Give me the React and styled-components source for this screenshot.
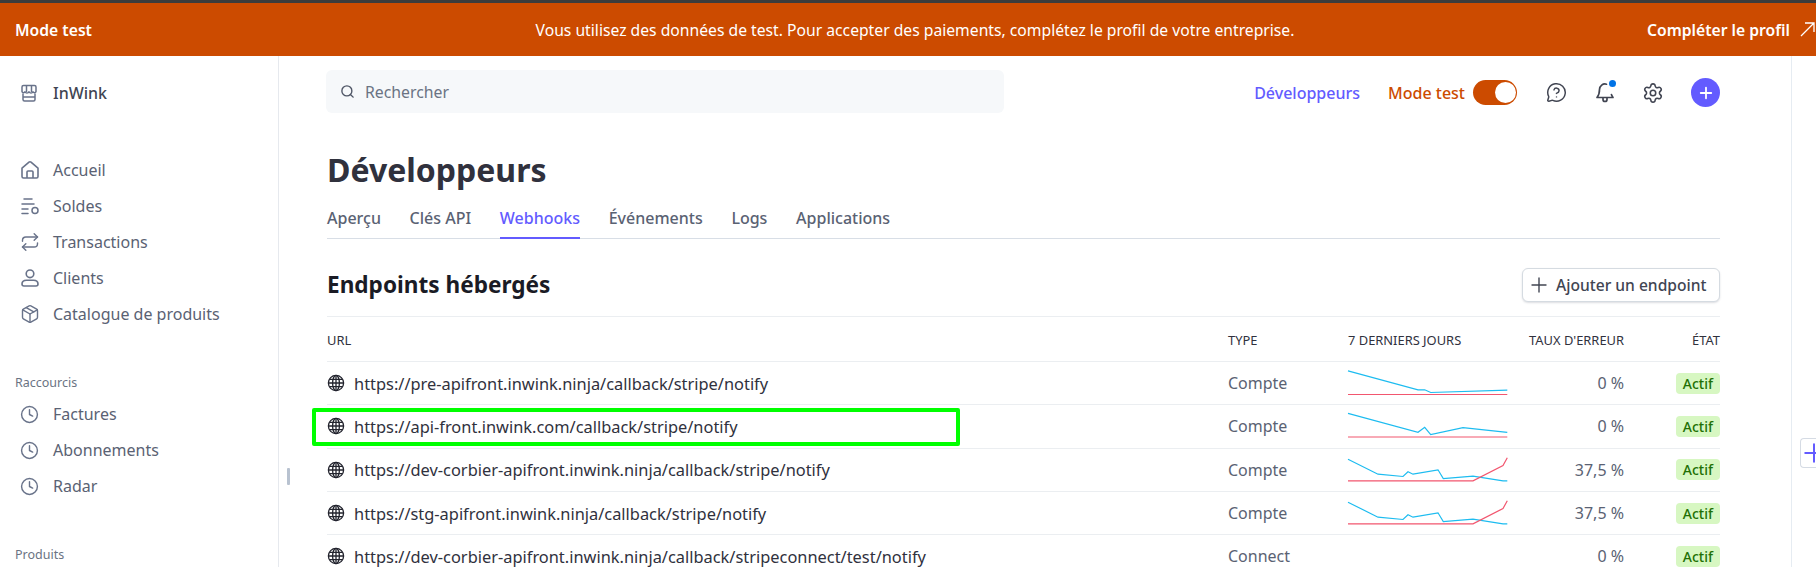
import React from 'react';
import styled, { createGlobalStyle } from 'styled-components';
import { Search, Plus, Settings, MessageCircleQuestion, Repeat, Package, Clock } from 'lucide-react';

const Global = createGlobalStyle`
  html, body { margin: 0; padding: 0; background: #fff; height: 100%; overflow: hidden; }
  body { font-family: "Noto Sans", "Open Sans", sans-serif; color: #414552; }
  * { box-sizing: border-box; }
`;

const Page = styled.div`height: 567px; overflow: hidden; display: flex; flex-direction: column; border-top: 3px solid #3c3c3c;`;
const Banner = styled.div`
  height: 53px; flex: none; background: #cc4b00; color: #fff; display: grid;
  grid-template-columns: 1fr auto 1fr; align-items: center; padding: 0 1px 0 15px; font-size: 15.7px;
`;
const BannerStrong = styled.span`font-weight: 600; font-size: 15.7px;`;
const BannerText = styled.span``;
const BannerLink = styled.span`justify-self: end; display: flex; align-items: center; gap: 10px; font-weight: 600;`;
const Body = styled.div`flex: 1; display: flex; min-height: 0;`;
const Sidebar = styled.aside`width: 279px; flex: none; border-right: 1px solid #e6e9ee; padding-top: 20px;`;
const Account = styled.div`display: flex; align-items: center; height: 34px; padding-left: 20px; font-size: 16px; font-weight: 500; color: #414552; margin-bottom: 42px; svg { color: #69738a; }`;
const NavItem = styled.div`display: flex; align-items: center; height: 36px; padding-left: 20px; font-size: 16px; color: #5a6273; svg { color: #69738a; }`;
const IconBox = styled.span`width: 33px; flex: none; display: flex; align-items: center;`;
const NavLabel = styled.div`font-size: 12.5px; color: #6a7383; padding-left: 15px; line-height: 18px; margin-bottom: ${p => p.$gap || 0}px;`;
const Group = styled.div`margin-top: ${p => p.$top}px;`;
const Main = styled.main`flex: 1; position: relative; padding: 14px 0 0 48px; min-width: 0; overflow: hidden;`;
const Handle = styled.div`position: absolute; left: 8px; top: 412px; width: 3px; height: 17px; background: #b8c2d0; border-radius: 1px;`;
const RightRail = styled.div`width: 25px; flex: none; border-left: 1px solid #e6ecf2; position: relative;`;
const RailWidget = styled.div`position: absolute; left: 8px; top: 382px; width: 24px; height: 30px; border: 1px solid #d5dbe4; border-right: none; border-radius: 4px 0 0 4px; color: #635bff; display: flex; align-items: center; background: #fff; svg { flex: none; margin-left: -2px; }`;
const Content = styled.div`width: 1393px;`;
const Topbar = styled.div`display: flex; align-items: center; height: 43px;`;
const SearchBox = styled.div`width: 678px; height: 43px; background: #f6f8fa; border-radius: 6px; display: flex; align-items: center; gap: 10px; padding-left: 14px; font-size: 15.8px; color: #6a7383; margin-left: -1px; svg { color: #4f5666; }`;
const TopActions = styled.div`margin-left: auto; display: flex; align-items: center; height: 43px; margin-top: 2px;`;
const DevLink = styled.span`color: #635bff; font-size: 16px; font-weight: 500; margin-right: 28px;`;
const ModeLabel = styled.span`color: #cc4b00; font-size: 16px; font-weight: 500; margin-right: 8px;`;
const Toggle = styled.span`width: 44px; height: 25px; border-radius: 13px; background: #cc4b00; display: flex; justify-content: flex-end; align-items: center; padding-right: 1px; margin-right: 29px;`;
const Knob = styled.span`width: 21px; height: 21px; border-radius: 50%; background: #fff; display: block;`;
const IconSlot = styled.span`position: relative; display: flex; color: #414552; margin-right: ${p => p.$mr}px;`;
const Dot = styled.span`position: absolute; top: -2px; right: -1px; width: 7px; height: 7px; border-radius: 50%; background: #0073e6;`;
const Round = styled.span`width: 29px; height: 29px; border-radius: 50%; background: #635bff; color: #fff; display: flex; align-items: center; justify-content: center;`;
const Title = styled.h1`margin: 37px 0 0; font-size: 32px; line-height: 40px; font-weight: 700; color: #30313d;`;
const Tabs = styled.div`margin-top: 9px; height: 40px; display: flex; gap: 28.7px; border-bottom: 1px solid #d8dee6;`;
const Tab = styled.div`height: 40px; display: flex; align-items: center; font-size: 16px; font-weight: 500; color: ${p => p.$active ? '#635bff' : '#5a6273'}; border-bottom: 2px solid ${p => p.$active ? '#635bff' : 'transparent'};`;
const SectionHead = styled.div`display: flex; align-items: center; justify-content: space-between; padding: 29px 0 14px;`;
const SectionTitle = styled.h2`margin: 0; font-size: 22.6px; line-height: 28px; font-weight: 700; color: #1a1b25;`;
const AddButton = styled.button`width: 198px; height: 34px; border: 1px solid #d5dbe1; border-radius: 6px; background: #fff; box-shadow: 0 1px 2px rgba(60,66,87,.18); display: flex; align-items: center; gap: 5px; padding: 0 0 0 4px; font: 500 15.6px "Noto Sans", sans-serif; color: #414552;`;
const Grid = styled.div`
  display: grid; grid-template-columns: 901px 120px 160px 116px 96px; align-items: center;
  border-bottom: 1px solid #ebeef1; position: relative;
`;
const HeadRow = styled(Grid)`height: 46px; padding-top: 1px; border-top: 1px solid #ebeef1; font-size: 12.9px; color: #30313d;`;
const Row = styled(Grid)`height: 43.33px; font-size: 16px; color: #5a6273;`;
const Right = styled.div`text-align: right;`;
const UrlCell = styled.div`display: flex; align-items: center; gap: 9px; color: #30313d; font-size: 16.4px; svg { color: #23242e; flex: none; }`;
const Badge = styled.span`float: right; height: 21px; padding: 0 7px; border-radius: 4px; background: #d7f7c2; color: #217005; font-size: 14px; font-weight: 500; display: flex; align-items: center;`;
const Highlight = styled.div`position: absolute; left: -15px; top: 3px; width: 648px; height: 38px; border: 4px solid #00ff00; border-radius: 2px; pointer-events: none;`;
const Spark = styled.svg`display: block; width: 160px; height: 30px; overflow: visible;`;

const ExternalArrow = () => (
  <svg width="15" height="15" viewBox="0 0 15 15" fill="none" stroke="currentColor" strokeWidth="1.3">
    <path d="M1 14 14 1M5 1h9v9" />
  </svg>
);
const StoreIcon = () => (
  <svg width="18" height="18" viewBox="0 0 18 18" fill="none" stroke="currentColor" strokeWidth="1.5" strokeLinejoin="round">
    <path d="M3.5 1.5h11a1.5 1.5 0 0 1 1.5 1.5v4.5a1.6 1.6 0 0 1-3 .3 2.2 2.2 0 0 1-4 0 2.2 2.2 0 0 1-4 0 1.6 1.6 0 0 1-3-.3V3a1.5 1.5 0 0 1 1.5-1.5Z" />
    <path d="M6.5 1.5v6.5M11.5 1.5v6.5" />
    <path d="M3 9.5v6a1.5 1.5 0 0 0 1.5 1.5h9a1.5 1.5 0 0 0 1.5-1.5v-6M3 13h12" />
  </svg>
);
const HomeIcon = () => (
  <svg width="20" height="20" viewBox="0 0 20 20" fill="none" stroke="currentColor" strokeWidth="1.6" strokeLinejoin="round">
    <path d="M2 8.2 9 2.2a1.5 1.5 0 0 1 2 0l7 6V16.5a1.5 1.5 0 0 1-1.5 1.5h-13A1.5 1.5 0 0 1 2 16.5Z" />
    <path d="M7 18v-6a1 1 0 0 1 1-1h4a1 1 0 0 1 1 1v6" />
  </svg>
);
const BalanceIcon = () => (
  <svg width="20" height="20" viewBox="0 0 20 20" fill="none" stroke="currentColor" strokeWidth="1.5" strokeLinecap="round">
    <path d="M4 3h8M2 8h12M2 13h6M2 17.5h6" />
    <circle cx="15" cy="14.5" r="3" />
  </svg>
);
const UserIcon = () => (
  <svg width="20" height="20" viewBox="0 0 20 20" fill="none" stroke="currentColor" strokeWidth="1.6">
    <circle cx="10" cy="5.8" r="3.8" />
    <path d="M2 16c0-2.4 2-3.8 4.5-3.8h7c2.5 0 4.5 1.4 4.5 3.8 0 1.2-.8 2-2 2H4c-1.2 0-2-.8-2-2Z" />
  </svg>
);
const GlobeIcon = () => (
  <svg width="18" height="18" viewBox="0 0 18 18" fill="none" stroke="currentColor" strokeWidth="1.3">
    <circle cx="9" cy="9" r="7.6" />
    <ellipse cx="9" cy="9" rx="3.4" ry="7.6" />
    <path d="M9 1.4v15.2M1.4 9h15.2M2.4 5.4h13.2M2.4 12.6h13.2" />
  </svg>
);
const BellIcon = () => (
  <svg width="20" height="22" viewBox="0 0 20 22" fill="none" stroke="currentColor" strokeWidth="1.7" strokeLinecap="round" strokeLinejoin="round">
    <path d="M11.5 2.2A5.5 5.5 0 0 0 4.5 7.5c0 4.5-1.2 6.5-2.5 8h16c-.6-.8-1.2-1.7-1.6-3" />
    <path d="M8 16v1.5a2 2 0 0 0 4 0V16" />
  </svg>
);

const rows = [
  { url: 'https://pre-apifront.inwink.ninja/callback/stripe/notify', type: 'Compte', rate: '0 %',
    blue: '0,2.8 70,21.8 76.7,21.8 82.7,24.5 159.3,22.2', red: '0,26.5 159.3,26.5' },
  { url: 'https://api-front.inwink.com/callback/stripe/notify', type: 'Compte', rate: '0 %', mark: true,
    blue: '0,2.3 70,21.3 76.7,16.3 82.7,23.7 115,16.7 159.3,21.3', red: '0,26 159.3,26' },
  { url: 'https://dev-corbier-apifront.inwink.ninja/callback/stripe/notify', type: 'Compte', rate: '37,5 %',
    blue: '0,4.2 30,19.2 55,21.5 60,16.8 65,19.2 90,14.8 95.3,23.5 125,21.2 155,25.8 159.3,25.8', red: '0,25.8 125,25.8 155,10.5 159.3,2.8' },
  { url: 'https://stg-apifront.inwink.ninja/callback/stripe/notify', type: 'Compte', rate: '37,5 %',
    blue: '0,4.2 30,19.2 55,21.5 60,16.8 65,19.2 90,14.8 95.3,23.5 125,21.2 155,25.8 159.3,25.8', red: '0,25.8 125,25.8 155,10.5 159.3,2.8' },
  { url: 'https://dev-corbier-apifront.inwink.ninja/callback/stripeconnect/test/notify', type: 'Connect', rate: '0 %' },
];

const tabs = ['Aperçu', 'Clés API', 'Webhooks', 'Événements', 'Logs', 'Applications'];
const lucide = I => () => <I size={20} strokeWidth={1.7} />;
const main = [['Accueil', HomeIcon], ['Soldes', BalanceIcon], ['Transactions', lucide(Repeat)], ['Clients', UserIcon], ['Catalogue de produits', lucide(Package)]];
const shortcuts = ['Factures', 'Abonnements', 'Radar'];

export default function App() {
  return (
    <Page>
      <Global />
      <Banner>
        <BannerStrong>Mode test</BannerStrong>
        <BannerText>Vous utilisez des données de test. Pour accepter des paiements, complétez le profil de votre entreprise.</BannerText>
        <BannerLink>Compléter le profil <ExternalArrow /></BannerLink>
      </Banner>
      <Body>
        <Sidebar>
          <Account><IconBox><StoreIcon /></IconBox>InWink</Account>
          {main.map(([label, Icon]) => (
            <NavItem key={label}><IconBox><Icon /></IconBox>{label}</NavItem>
          ))}
          <Group $top={42}>
            <NavLabel $gap={4}>Raccourcis</NavLabel>
            {shortcuts.map(label => <NavItem key={label}><IconBox><Clock size={19} strokeWidth={1.8} /></IconBox>{label}</NavItem>)}
          </Group>
          <Group $top={42}><NavLabel>Produits</NavLabel></Group>
        </Sidebar>
        <Main>
          <Handle />
          <Content>
            <Topbar>
              <SearchBox><Search size={15} strokeWidth={2.2} />Rechercher</SearchBox>
              <TopActions>
                <DevLink>Développeurs</DevLink>
                <ModeLabel>Mode test</ModeLabel>
                <Toggle><Knob /></Toggle>
                <IconSlot $mr={28}><MessageCircleQuestion size={21} strokeWidth={1.7} /></IconSlot>
                <IconSlot $mr={27}><BellIcon /><Dot /></IconSlot>
                <IconSlot $mr={27}><Settings size={22} strokeWidth={1.7} /></IconSlot>
                <Round><Plus size={18} strokeWidth={2.4} /></Round>
              </TopActions>
            </Topbar>
            <Title>Développeurs</Title>
            <Tabs>{tabs.map(t => <Tab key={t} $active={t === 'Webhooks'}>{t}</Tab>)}</Tabs>
            <SectionHead>
              <SectionTitle>Endpoints hébergés</SectionTitle>
              <AddButton><Plus size={24} strokeWidth={1.4} />Ajouter un endpoint</AddButton>
            </SectionHead>
            <HeadRow>
              <div>URL</div><div>TYPE</div><div>7 DERNIERS JOURS</div>
              <Right>TAUX D'ERREUR</Right><Right>ÉTAT</Right>
            </HeadRow>
            {rows.map(r => (
              <Row key={r.url}>
                <UrlCell><GlobeIcon />{r.url}</UrlCell>
                <div>{r.type}</div>
                <div>
                  {r.blue && (
                    <Spark viewBox="0 0 160 30">
                      <polyline points={r.blue} fill="none" stroke="#1dbcf0" strokeWidth="1.2" />
                      <polyline points={r.red} fill="none" stroke="#f2566f" strokeWidth="1.2" />
                    </Spark>
                  )}
                </div>
                <Right>{r.rate}</Right>
                <div><Badge>Actif</Badge></div>
                {r.mark && <Highlight />}
              </Row>
            ))}
          </Content>
        </Main>
        <RightRail><RailWidget><Plus size={30} strokeWidth={1.6} /></RailWidget></RightRail>
      </Body>
    </Page>
  );
}
